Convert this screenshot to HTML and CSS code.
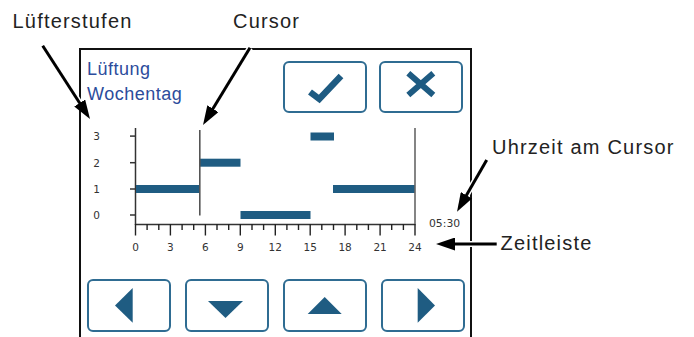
FILE: index.html
```html
<!DOCTYPE html>
<html lang="de">
<head>
<meta charset="utf-8">
<title>Lüftung Wochentag</title>
<link rel="stylesheet" href="styles.css">
</head>
<body>
<div class="stage">
  <div class="device">
    <div class="head">
      <div class="title">Lüftung<br>Wochentag</div>
      <div class="actions">
        <button class="btn" type="button" aria-label="OK">
          <svg class="ico" viewBox="0 0 80 48" width="80" height="48"><polyline points="25,29 34.3,36 56,13" fill="none" stroke="#1e5b82" stroke-width="6.5" stroke-linejoin="miter"/></svg>
        </button>
        <button class="btn" type="button" aria-label="Abbrechen">
          <svg class="ico" viewBox="0 0 80 48" width="80" height="48"><path d="M27.3 10.3 L52.3 32 M52.3 10.3 L27.3 32" fill="none" stroke="#1e5b82" stroke-width="6"/></svg>
        </button>
      </div>
    </div>
    <svg class="chart" viewBox="81 120 389 150" width="389" height="150">
      <g class="ylab" font-family="DejaVu Sans, sans-serif" font-size="10.5" fill="#333" text-anchor="middle">
        <text x="96.5" y="140">3</text>
        <text x="96.5" y="166.7">2</text>
        <text x="96.5" y="193">1</text>
        <text x="96.5" y="219">0</text>
      </g>
      <g stroke="#333" stroke-width="1.5">
        <line x1="130" y1="136.1" x2="136" y2="136.1"/>
        <line x1="130" y1="162.7" x2="136" y2="162.7"/>
        <line x1="130" y1="189" x2="136" y2="189"/>
        <line x1="130" y1="215" x2="136" y2="215"/>
        <line x1="135.5" y1="128" x2="135.5" y2="225"/>
        <line x1="135" y1="224.5" x2="415.5" y2="224.5"/>
      </g>
      <g stroke="#222" stroke-width="1.4">
        <line x1="135.5" y1="224" x2="135.5" y2="235.5"/>
        <line x1="147.1" y1="224" x2="147.1" y2="230"/>
        <line x1="158.8" y1="224" x2="158.8" y2="230"/>
        <line x1="170.4" y1="224" x2="170.4" y2="235.5"/>
        <line x1="182.1" y1="224" x2="182.1" y2="230"/>
        <line x1="193.7" y1="224" x2="193.7" y2="230"/>
        <line x1="205.4" y1="224" x2="205.4" y2="235.5"/>
        <line x1="217" y1="224" x2="217" y2="230"/>
        <line x1="228.7" y1="224" x2="228.7" y2="230"/>
        <line x1="240.3" y1="224" x2="240.3" y2="235.5"/>
        <line x1="252" y1="224" x2="252" y2="230"/>
        <line x1="263.6" y1="224" x2="263.6" y2="230"/>
        <line x1="275.3" y1="224" x2="275.3" y2="235.5"/>
        <line x1="286.9" y1="224" x2="286.9" y2="230"/>
        <line x1="298.5" y1="224" x2="298.5" y2="230"/>
        <line x1="310.2" y1="224" x2="310.2" y2="235.5"/>
        <line x1="321.8" y1="224" x2="321.8" y2="230"/>
        <line x1="333.5" y1="224" x2="333.5" y2="230"/>
        <line x1="345.1" y1="224" x2="345.1" y2="235.5"/>
        <line x1="356.8" y1="224" x2="356.8" y2="230"/>
        <line x1="368.4" y1="224" x2="368.4" y2="230"/>
        <line x1="380.1" y1="224" x2="380.1" y2="235.5"/>
        <line x1="391.7" y1="224" x2="391.7" y2="230"/>
        <line x1="403.4" y1="224" x2="403.4" y2="230"/>
        <line x1="415" y1="224" x2="415" y2="235.5"/>
      </g>
      <g font-family="DejaVu Sans, sans-serif" font-size="10.5" fill="#333" text-anchor="middle">
        <text x="135.5" y="251">0</text>
        <text x="170.4" y="251">3</text>
        <text x="205.4" y="251">6</text>
        <text x="240.3" y="251">9</text>
        <text x="275.3" y="251">12</text>
        <text x="310.2" y="251">15</text>
        <text x="345.1" y="251">18</text>
        <text x="380.1" y="251">21</text>
        <text x="415" y="251">24</text>
      </g>
      <g fill="#1f5c82">
        <rect x="136" y="185" width="64" height="8"/>
        <rect x="200" y="158.7" width="40.5" height="8"/>
        <rect x="240.5" y="211" width="70" height="8"/>
        <rect x="310.5" y="132.5" width="23.5" height="8"/>
        <rect x="333" y="185" width="82" height="8"/>
      </g>
      <line x1="199.8" y1="130" x2="199.8" y2="215.5" stroke="#555" stroke-width="1.6"/>
      <line x1="415" y1="128" x2="415" y2="224" stroke="#666" stroke-width="1.6"/>
      <text x="429" y="227" font-family="DejaVu Sans, sans-serif" font-size="10.8" fill="#333">05:30</text>
    </svg>
    <div class="nav">
      <button class="btn btn-nav" type="button" aria-label="Links">
        <svg class="ico" viewBox="0 0 80 49" width="80" height="49"><polygon points="26,24.5 43.7,7 43.7,41.7" fill="#1f5c82"/></svg>
      </button>
      <button class="btn btn-nav" type="button" aria-label="Runter">
        <svg class="ico" viewBox="0 0 80 49" width="80" height="49"><polygon points="21,20 56,20 38.5,37" fill="#1f5c82"/></svg>
      </button>
      <button class="btn btn-nav" type="button" aria-label="Hoch">
        <svg class="ico" viewBox="0 0 80 49" width="80" height="49"><polygon points="22.7,33 56.7,33 39.7,16" fill="#1f5c82"/></svg>
      </button>
      <button class="btn btn-nav" type="button" aria-label="Rechts">
        <svg class="ico" viewBox="0 0 80 49" width="80" height="49"><polygon points="34.7,7 34.7,41.7 52,24.5" fill="#1f5c82"/></svg>
      </button>
    </div>
  </div>

  <div class="callouts">
    <svg class="arrows" viewBox="0 0 694 337" width="694" height="337">
      <defs>
        <marker id="head" markerUnits="userSpaceOnUse" markerWidth="19" markerHeight="13" refX="5" refY="6.5" orient="auto">
          <path d="M0,0 L19,6.5 L0,13 z" fill="#000"/>
        </marker>
      </defs>
      <g stroke="#fff" stroke-width="6" fill="none">
        <line x1="42.7" y1="45.7" x2="82.4" y2="107.2"/>
        <line x1="250" y1="47.7" x2="210.3" y2="113"/>
        <line x1="486.7" y1="160" x2="464" y2="199.6"/>
        <line x1="496.7" y1="244" x2="450" y2="244"/>
      </g>
      <g stroke="#000" stroke-width="3" fill="none">
        <line x1="42.7" y1="45.7" x2="82.4" y2="107.2" marker-end="url(#head)"/>
        <line x1="250" y1="47.7" x2="210.3" y2="113" marker-end="url(#head)"/>
        <line x1="486.7" y1="160" x2="464" y2="199.6" marker-end="url(#head)"/>
        <line x1="496.7" y1="244" x2="450" y2="244" marker-end="url(#head)"/>
      </g>
    </svg>
    <span class="label label-stufen">Lüfterstufen</span>
    <span class="label label-cursor">Cursor</span>
    <span class="label label-uhrzeit">Uhrzeit am Cursor</span>
    <span class="label label-zeit">Zeitleiste</span>
  </div>
</div>
</body>
</html>
```

FILE: styles.css
```css
* {
  box-sizing: border-box;
}

html,
body {
  margin: 0;
  padding: 0;
  background: #fff;
}

body {
  width: 694px;
  height: 337px;
  overflow: hidden;
  font-family: "Liberation Sans", Arial, sans-serif;
}

.stage {
  position: relative;
  width: 694px;
  height: 337px;
  padding-top: 48px;
  padding-left: 79px;
}

.device {
  width: 393px;
  height: 289px;
  border: 2px solid #111;
  border-bottom: none;
  display: flex;
  flex-direction: column;
}

.head {
  display: flex;
  justify-content: space-between;
  align-items: flex-start;
  padding: 0 7px 0 6px;
}

.title {
  margin-top: 7px;
  font-size: 18px;
  line-height: 25px;
  letter-spacing: 0.5px;
  color: #2c4c9c;
}

.actions {
  display: flex;
  gap: 12px;
  margin-top: 11px;
}

.btn {
  width: 84px;
  height: 52px;
  padding: 0;
  margin: 0;
  border: 2px solid #2f6c92;
  border-radius: 6px;
  background: #fff;
  display: block;
}

.btn-nav {
  height: 53px;
}

.ico {
  display: block;
}

.chart {
  display: block;
  margin-top: 7px;
}

.nav {
  display: flex;
  gap: 14px;
  margin-top: 9px;
  padding-left: 6px;
}

.callouts {
  position: absolute;
  inset: 0;
  pointer-events: none;
}

.arrows {
  position: absolute;
  left: 0;
  top: 0;
  display: block;
}

.label {
  position: absolute;
  font-size: 20px;
  line-height: 20px;
  letter-spacing: 1.2px;
  color: #222;
  white-space: nowrap;
}

.label-stufen {
  left: 12.5px;
  top: 11.4px;
}

.label-cursor {
  left: 233px;
  top: 11.4px;
}

.label-uhrzeit {
  left: 492px;
  top: 137px;
}

.label-zeit {
  left: 500.5px;
  top: 233px;
}
```
